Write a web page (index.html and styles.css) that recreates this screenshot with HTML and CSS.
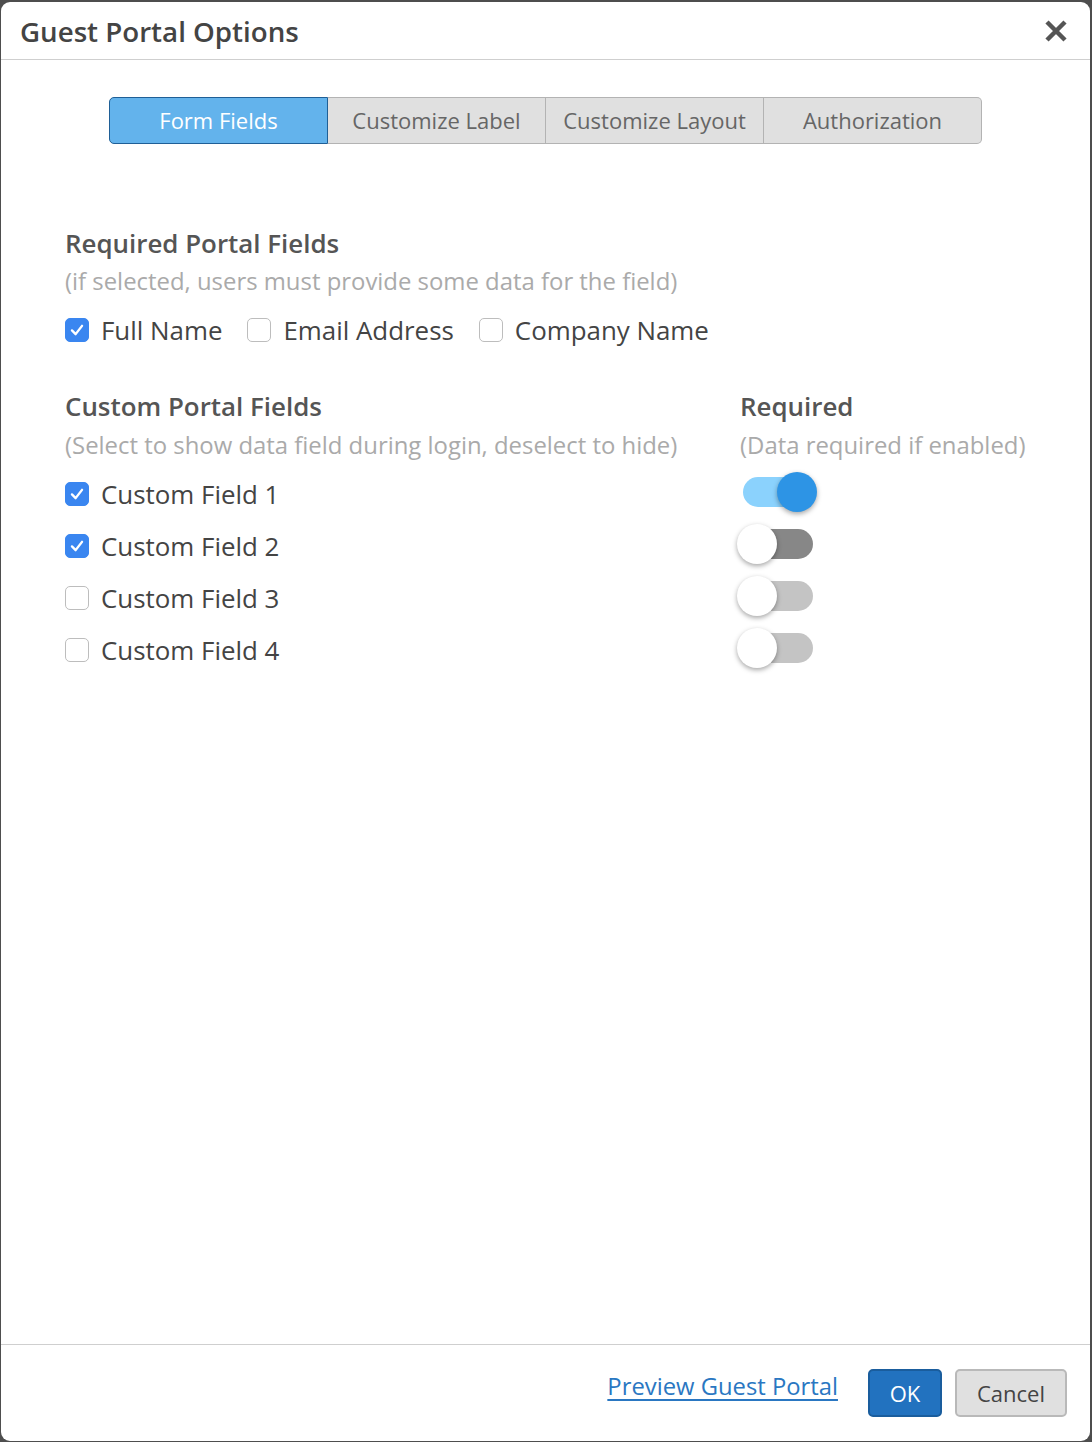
FILE: index.html
```html
<!DOCTYPE html>
<html lang="en">
<head>
    <meta charset="UTF-8">
    <title>Guest Portal Options</title>
    <link rel="stylesheet" href="styles.css">
</head>
<body>
    <div class="dialog">
        <div class="dialog-header">
            <h1>Guest Portal Options</h1>
            <button class="close" aria-label="Close">
                <svg width="24" height="24" viewBox="0 0 24 24"><path d="M3 3 L21 21 M21 3 L3 21" stroke="#555" stroke-width="4.5" stroke-linecap="butt"/></svg>
            </button>
        </div>

        <div class="dialog-body">
            <div class="tabs">
                <div class="tab active">Form Fields</div>
                <div class="tab">Customize Label</div>
                <div class="tab">Customize Layout</div>
                <div class="tab">Authorization</div>
            </div>

            <div class="section">
                <h2>Required Portal Fields</h2>
                <p class="hint">(if selected, users must provide some data for the field)</p>
                <div class="inline-checks">
                    <label class="check"><span class="box checked"><svg viewBox="0 0 24 24"><path d="M6.5 12.5 L10.5 16.5 L17.5 7.5" fill="none" stroke="#fff" stroke-width="2.6" stroke-linecap="round" stroke-linejoin="round"/></svg></span>Full Name</label>
                    <label class="check"><span class="box"></span>Email Address</label>
                    <label class="check"><span class="box"></span>Company Name</label>
                </div>
            </div>

            <div class="custom">
                <div class="col-head">
                    <h2>Custom Portal Fields</h2>
                    <p class="hint">(Select to show data field during login, deselect to hide)</p>
                </div>
                <div class="col-head">
                    <h2>Required</h2>
                    <p class="hint">(Data required if enabled)</p>
                </div>

                <label class="check row"><span class="box checked"><svg viewBox="0 0 24 24"><path d="M6.5 12.5 L10.5 16.5 L17.5 7.5" fill="none" stroke="#fff" stroke-width="2.6" stroke-linecap="round" stroke-linejoin="round"/></svg></span>Custom Field 1</label>
                <div class="row"><span class="toggle on"><span class="knob"></span></span></div>

                <label class="check row"><span class="box checked"><svg viewBox="0 0 24 24"><path d="M6.5 12.5 L10.5 16.5 L17.5 7.5" fill="none" stroke="#fff" stroke-width="2.6" stroke-linecap="round" stroke-linejoin="round"/></svg></span>Custom Field 2</label>
                <div class="row"><span class="toggle dark"><span class="knob"></span></span></div>

                <label class="check row"><span class="box"></span>Custom Field 3</label>
                <div class="row"><span class="toggle"><span class="knob"></span></span></div>

                <label class="check row"><span class="box"></span>Custom Field 4</label>
                <div class="row"><span class="toggle"><span class="knob"></span></span></div>
            </div>
        </div>

        <div class="dialog-footer">
            <a href="#" class="preview">Preview Guest Portal</a>
            <button class="btn btn-primary">OK</button>
            <button class="btn">Cancel</button>
        </div>
    </div>
</body>
</html>
```

FILE: styles.css
```css
html, body { height: 100%; }
body { margin: 0; background: #4e4e4e; font-family: "Open Sans", Arial, sans-serif; color: #444; }
.dialog { box-sizing: border-box; height: calc(100% - 3px); margin: 2px 2px 1px 1px; background: #fff; border-radius: 9px; display: flex; flex-direction: column; }

.dialog-header { display: flex; align-items: center; justify-content: space-between; height: 57px; padding: 0 20px 0 19px; border-bottom: 1px solid #cfcfcf; }
.dialog-header h1 { margin: 0; font-size: 27.7px; font-weight: 600; color: #444; }
.close { background: none; border: none; padding: 0; width: 24px; height: 24px; cursor: pointer; margin-right: 2px; margin-top: 1px; }

.dialog-body { flex: 1; padding: 37px 64px 0 64px; }

.tabs { display: flex; width: 873px; margin: 0 auto 0 44px; }
.tab { flex: 1; height: 45px; display: flex; align-items: center; justify-content: center; background: #e0e0e0; border: 1px solid #b3b3b3; border-left: none; color: #666; font-size: 22px; padding-bottom: 2px; box-sizing: border-box; height: 47px; }
.tab:first-child { border-left: 1px solid #b3b3b3; border-radius: 5px 0 0 5px; }
.tab:last-child { border-radius: 0 5px 5px 0; }
.tab.active { background: #63b3ec; border: 1px solid #1f5f96; color: #fff; border-radius: 5px 0 0 5px; }

h2 { margin: 0; font-size: 25.9px; font-weight: 600; color: #555; line-height: 34px; }
.hint { margin: 4px 0 0; font-size: 23.9px; color: #aaa; line-height: 34px; }

.section { margin-top: 82px; }
.inline-checks { display: flex; gap: 25px; margin-top: 15px; }

.check { display: flex; align-items: center; font-size: 25.9px; color: #444; line-height: 34px; cursor: pointer; }
.box { box-sizing: border-box; width: 24px; height: 24px; border: 1px solid #bdbdbd; border-radius: 5px; margin: 0 12px 0 0; background: #fff; display: inline-flex; }
.box.checked { background: #3a86f0; border-color: #3a86f0; }
.box svg { width: 22px; height: 22px; }

.custom { display: grid; grid-template-columns: 675px 1fr; margin-top: 42px; }
.col-head { margin-bottom: 6px; }
.col-head .hint { margin-top: 5px; }
.row { height: 52px; display: flex; align-items: center; }

.toggle { position: relative; width: 70px; height: 30px; border-radius: 15px; background: #c4c4c4; margin: 0 0 4px 3px; }
.toggle.dark { background: #878787; }
.toggle.on { background: #8bd2fd; }
.knob { position: absolute; top: -5px; left: -6px; width: 40px; height: 40px; border-radius: 50%; background: #fff; box-shadow: 0 2px 5px rgba(0,0,0,0.35); }
.toggle.on .knob { left: 34px; background: #2d94e5; }

.dialog-footer { display: flex; align-items: center; justify-content: flex-end; height: 96px; border-top: 1px solid #cfcfcf; padding: 0 23px 0 0; }
.preview { color: #2a77c2; font-size: 23.8px; margin: 0 17px 15px 0; text-underline-offset: 4px; }
.btn { box-sizing: border-box; height: 48px; padding: 0 20px; font-family: "Open Sans", Arial, sans-serif; font-size: 22px; color: #444; background: #e0e0e0; border: 2px solid #b9b9b9; border-radius: 5px; margin-left: 13px; cursor: pointer; }
.btn-primary { background: #2272bf; border-color: #1a5d9d; color: #fff; width: 74px; padding: 0; }
```
